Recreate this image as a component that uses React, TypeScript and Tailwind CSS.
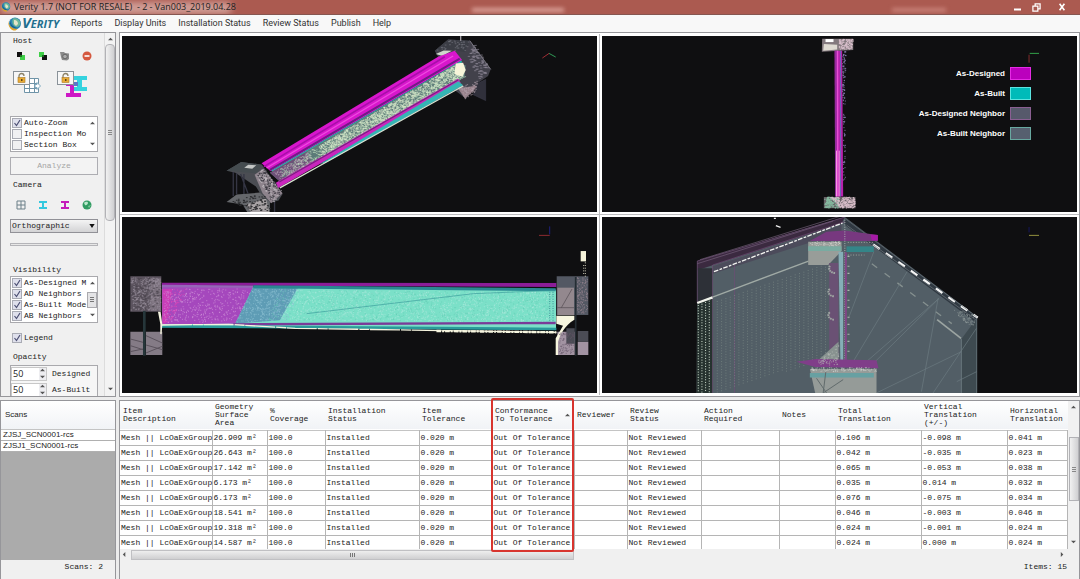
import type { ReactNode } from 'react'
import clsx from 'clsx'

const menus = ['Reports', 'Display Units', 'Installation Status', 'Review Status', 'Publish', 'Help']

const legend = [
  { label: 'As-Designed', swatch: 'bg-[#bb00bd] border-[#e52be4]' },
  { label: 'As-Built', swatch: 'bg-[#00bbb9] border-[#5ce4e0]' },
  { label: 'As-Designed Neighbor', swatch: 'bg-[#56596b] border-[#8a5f92]' },
  { label: 'As-Built Neighbor', swatch: 'bg-[#56606f] border-[#68a8a0]' },
]

const columns = [
  { title: ['Item', 'Description'], width: 'w-[92px]' },
  { title: ['Geometry', 'Surface', 'Area'], width: 'w-[55px]' },
  { title: ['%', 'Coverage'], width: 'w-[58px]' },
  { title: ['Installation', 'Status'], width: 'w-[94px]' },
  { title: ['Item', 'Tolerance'], width: 'w-[73px]' },
  { title: ['Conformance', 'To Tolerance'], width: 'w-[82px]', sorted: true },
  { title: ['Reviewer'], width: 'w-[53px]' },
  { title: ['Review', 'Status'], width: 'w-[74px]' },
  { title: ['Action', 'Required'], width: 'w-[78px]' },
  { title: ['Notes'], width: 'w-[56px]' },
  { title: ['Total', 'Translation'], width: 'w-[86px]' },
  { title: ['Vertical', 'Translation', '(+/-)'], width: 'w-[86px]' },
  { title: ['Horizontal', 'Translation'], width: '' },
]

const items = [
  { area: '26.909', total: '0.106', vertical: '-0.098', horizontal: '0.041' },
  { area: '26.643', total: '0.042', vertical: '-0.035', horizontal: '0.023' },
  { area: '17.142', total: '0.065', vertical: '-0.053', horizontal: '0.038' },
  { area: '6.173', total: '0.035', vertical: '0.014', horizontal: '0.032' },
  { area: '6.173', total: '0.076', vertical: '-0.075', horizontal: '0.034' },
  { area: '18.541', total: '0.046', vertical: '-0.003', horizontal: '0.046' },
  { area: '19.318', total: '0.024', vertical: '-0.001', horizontal: '0.024' },
  { area: '14.587', total: '0.024', vertical: '0.000', horizontal: '0.024' },
]

const scans = ['ZJSJ_SCN0001-rcs', 'ZJSJ1_SCN0001-rcs']

type Point = [number, number]
type Quad = [Point, Point, Point, Point]

// scatters n short dashes inside a quad, same result on every render
function scatter(quad: Quad, n: number, seed = 1, len = 3) {
  let s = seed * 7919
  const rnd = () => {
    s = (s * 16807) % 2147483647
    return s / 2147483647
  }
  rnd()
  let d = ''
  for (let i = 0; i < n; i++) {
    const u = rnd()
    const v = rnd()
    const at = (k: 0 | 1) =>
      (1 - v) * ((1 - u) * quad[0][k] + u * quad[1][k]) + v * ((1 - u) * quad[3][k] + u * quad[2][k])
    d += `M${at(0).toFixed(0)} ${at(1).toFixed(0)}h${len}`
  }
  return d
}

// vertical columns of scan points between two sloping edges
function dotColumns(x0: number, x1: number, step: number, top: (x: number) => number, bottom: (x: number) => number) {
  let d = ''
  for (let x = x0; x < x1; x += step) {
    for (let y = top(x); y < bottom(x); y += 8) d += `M${x} ${y.toFixed(0)}v3`
  }
  return d
}

function Globe({ className }: { className: string }) {
  return (
    <svg viewBox="0 0 14 14" className={className} aria-hidden="true">
      <circle cx="7" cy="6.500" r="6" fill="#2b86b4" />
      <path d="M5 1.500c4-1 7 1 7.500 5-1 3-3 4-5 3-3-1-4-5-2.500-8z" fill="#6db79a" />
      <path d="M6 3c3 0 4 2 4 4L8 9 6 7z" fill="#e4e4c8" />
      <path d="M0.500 4c0 5 4 8 9 8l-2 1.500C3 14-0.500 9 0.500 4z" fill="#e0a32c" />
      <path d="M2 3c0 4 3 7 7 8-4 1-8-3-7-8z" fill="#185980" />
    </svg>
  )
}

function Cubes({ flip }: { flip?: boolean }) {
  return (
    <svg viewBox="0 0 10 10" className="size-[10px]">
      <rect x="1" y="1" width="5" height="5" fill={flip ? '#3fcf48' : '#111'} />
      <rect x="4" y="4" width="5" height="5" fill={flip ? '#111' : '#3fcf48'} />
      <path d="M4 4h2v2H4z" fill="#1b6b20" />
    </svg>
  )
}

function Beam({ color }: { color: string }) {
  return (
    <svg viewBox="0 0 10 10" className="size-[10px]">
      <path d="M1 1h8v2H6v4h3v2H1V7h3V3H1z" fill={color} />
    </svg>
  )
}

function Padlock() {
  return (
    <>
      <rect x="0.5" y="0.5" width="16" height="13" fill="#f7f7f7" stroke="#8a9299" />
      <path d="M6 7V5a2.5 2.500 0 0 1 5 0" fill="none" stroke="#8d8368" strokeWidth="1.300" />
      <rect x="5" y="6.500" width="7" height="5" fill="#e8ab36" stroke="#ab7923" strokeWidth="0.600" />
      <path d="M8 8h1.500v2H8z" fill="#5e4619" />
    </>
  )
}

function IconButton({ label, children }: { label: string; children: ReactNode }) {
  return (
    <button type="button" aria-label={label} className="flex h-[14px] w-[22px] items-center justify-center">
      {children}
    </button>
  )
}

function Check({ label, checked }: { label: string; checked?: boolean }) {
  return (
    <label className="flex h-[11px] items-center gap-[2px] whitespace-nowrap">
      <span className="relative flex size-[10px] shrink-0">
        <input
          type="checkbox"
          defaultChecked={checked}
          className="peer size-[10px] appearance-none border border-[#a9abb4] bg-[#f0f0f2] checked:bg-[#dfe0ec]"
        />
        <svg viewBox="0 0 10 10" className="pointer-events-none absolute inset-0 hidden peer-checked:block">
          <path d="M2.500 5l2 2.500L8 2" fill="none" stroke="#4c4f73" strokeWidth="1.200" />
        </svg>
      </span>
      {label}
    </label>
  )
}

function Arrow({ dir }: { dir: 'up' | 'down' | 'left' | 'right' }) {
  const paths = { up: 'M0 4l3-3 3 3z', down: 'M0 1l3 3 3-3z', left: 'M4 0L1 3l3 3z', right: 'M1 0l3 3-3 3z' }
  return (
    <svg viewBox="0 0 6 6" className="size-[5px] shrink-0" fill="#555" aria-hidden="true">
      <path d={paths[dir]} />
    </svg>
  )
}

function Spin({ id, label }: { id: string; label: string }) {
  return (
    <div className="flex h-4 items-center">
      <div className="flex h-[14px] w-9 border border-[#c8c8c8] bg-white">
        <input id={id} defaultValue="50" className="w-0 min-w-0 flex-1 pl-px font-['Open_Sans',sans-serif] text-[9px]" />
        <span className="flex flex-col justify-center gap-[2px] bg-[#ededf0] px-px">
          <Arrow dir="up" />
          <Arrow dir="down" />
        </span>
      </div>
      <label htmlFor={id} className="pl-[5px] whitespace-nowrap">{label}</label>
    </div>
  )
}

function Sidebar() {
  return (
    <aside className="flex w-[116px] shrink-0 overflow-hidden border border-[#96969a] bg-[#f0f0f0]">
      <div className="min-w-0 flex-1 overflow-hidden pl-[9px]">
        <div className="w-[88px]">
          <h2 className="mt-[2px] h-3 pl-[3px] leading-3">Host</h2>
          <div className="mt-[2px] flex">
            <IconButton label="Link host"><Cubes /></IconButton>
            <IconButton label="Unlink host"><Cubes flip /></IconButton>
            <IconButton label="Capture">
              <svg viewBox="0 0 10 10" className="size-[10px]">
                <path d="M0 1h4l1 1 4 0.500V8L7 9.500 2 9 1 6z" fill="#8a8a8a" />
                <circle cx="5" cy="5.500" r="2.300" fill="#aaa" stroke="#666" />
              </svg>
            </IconButton>
            <IconButton label="Remove">
              <svg viewBox="0 0 10 10" className="size-[10px]">
                <circle cx="5" cy="5" r="4.500" fill="#d5583f" />
                <path d="M2.500 4.200h5v1.600h-5z" fill="#fff" />
              </svg>
            </IconButton>
          </div>
          <div className="mt-2 flex gap-4 pl-[3px]">
            <button type="button" aria-label="Lock table">
              <svg viewBox="0 0 28 27" className="h-[27px] w-7">
                <path d="M11.500 7.500h14v14h-14zM11.500 12.500h14M11.500 17.500h14M16.500 7.500v14M21.500 7.500v14" fill="#fff" stroke="#6f94a8" />
                <path d="M22 13.500h2v-2l3.500 3.500-3.500 3.500v-2h-2z" fill="#fff" stroke="#7faac0" />
                <Padlock />
              </svg>
            </button>
            <button type="button" aria-label="Lock model">
              <svg viewBox="0 0 31 27" className="h-[27px] w-[31px]">
                <path d="M16 5h14v4h-5v7h5v4H16v-4h4V9h-4z" fill="#35d3df" />
                <path d="M9 11h12v4h-4v7h7v4H9v-4h4v-7H9z" fill="#cd18c5" />
                <path d="M16 11h5v4h-5z" fill="#5b78c9" />
                <Padlock />
              </svg>
            </button>
          </div>

          <div className="mt-[18px] flex h-9 border border-[#a9a9ad] bg-white pl-px">
            <div className="min-w-0 flex-1">
              <Check label="Auto-Zoom" checked />
              <Check label="Inspection Mo" />
              <Check label="Section Box" />
            </div>
            <div className="flex w-[10px] flex-col items-center justify-between py-1">
              <Arrow dir="up" />
              <Arrow dir="down" />
            </div>
          </div>
          <button type="button" disabled className="mt-[5px] h-[18px] w-full border border-[#adadb2] bg-[#f3f3f3] text-[#a5a5a5]">
            Analyze
          </button>

          <h2 className="mt-1 h-3 pl-[3px] leading-3">Camera</h2>
          <div className="mt-[7px] flex">
            <IconButton label="Four views">
              <svg viewBox="0 0 10 10" className="size-[10px]">
                <path d="M1 1h8v8H1zM1 5h8M5 1v8" fill="none" stroke="#6d8089" />
              </svg>
            </IconButton>
            <IconButton label="As-built camera"><Beam color="#34c8de" /></IconButton>
            <IconButton label="As-designed camera"><Beam color="#c51cba" /></IconButton>
            <IconButton label="World camera">
              <svg viewBox="0 0 10 10" className="size-[10px]">
                <circle cx="5" cy="5" r="4.500" fill="#319b62" />
                <path d="M2 3c2-2 4-1 4 0S4 6 3 5z" fill="#b9e7ca" />
                <path d="M6 6l3-1-2 3z" fill="#7cc898" />
              </svg>
            </IconButton>
          </div>
          <div className="relative mt-[7px]">
            <select
              aria-label="Projection"
              className="h-[14px] w-full appearance-none border border-[#919197] bg-linear-to-b from-[#f4f4f4] to-[#d3d3d5] pl-px"
            >
              <option>Orthographic</option>
            </select>
            <svg viewBox="0 0 8 6" className="pointer-events-none absolute top-[5px] right-[3px] h-[4px] w-[6px]">
              <path d="M0 0h8L4 6z" fill="#111" />
            </svg>
          </div>
          <div className="mt-[10px] h-[3px] border border-[#b4b4b8] bg-[#e7e7e7]" />

          <h2 className="mt-[18px] h-3 pl-[3px] leading-3">Visibility</h2>
          <div className="flex h-[47px] border border-[#a9a9ad] bg-white pl-px">
            <div className="min-w-0 flex-1">
              <Check label="As-Designed M" checked />
              <Check label="AD Neighbors" checked />
              <Check label="As-Built Mode" checked />
              <Check label="AB Neighbors" checked />
            </div>
            <div className="flex w-[10px] flex-col items-center justify-between py-1">
              <Arrow dir="up" />
              <span className="flex h-4 w-[10px] flex-col items-center justify-center gap-px border border-[#aaaaae] bg-[#e4e4e6]">
                <i className="h-px w-1 bg-[#777]" />
                <i className="h-px w-1 bg-[#777]" />
                <i className="h-px w-1 bg-[#777]" />
              </span>
              <Arrow dir="down" />
            </div>
          </div>
          <div className="mt-[9px] pl-[2px]">
            <Check label="Legend" checked />
          </div>

          <h2 className="mt-2 h-3 pl-[3px] leading-3">Opacity</h2>
          <div className="mt-[2px] border border-b-0 border-[#a9a9ad] bg-[#f6f6f6]">
            <Spin id="designed" label="Designed" />
            <Spin id="as-built" label="As-Built" />
          </div>
        </div>
      </div>
      <div className="flex w-[11px] flex-col items-center border-l border-[#dcdcdc] bg-[#f3f3f3] pt-[4px] pb-1">
        <Arrow dir="up" />
        <span className="mt-[2px] flex h-[177px] w-[10px] flex-col items-center justify-center gap-px rounded-sm border border-[#b2b2b6] bg-linear-to-r from-[#f1f1f1] to-[#d0d0d2]">
          <i className="h-px w-1 bg-[#888]" />
          <i className="h-px w-1 bg-[#888]" />
          <i className="h-px w-1 bg-[#888]" />
        </span>
        <span className="mt-auto"><Arrow dir="down" /></span>
      </div>
    </aside>
  )
}

function Pane({ children, overlay }: { children: ReactNode; overlay?: ReactNode }) {
  return (
    <div className="relative min-h-0 min-w-0 overflow-hidden border-2 border-white bg-[#0f0f11]">
      <svg viewBox="6 6 1426 528" preserveAspectRatio="xMidYMid meet" className="absolute inset-0 size-full">
        {children}
      </svg>
      {overlay}
    </div>
  )
}

function PerspectiveView() {
  const web: Quad = [[480, 405], [1012, 88], [1036, 128], [490, 436]]
  const face: Quad = [[1040, 62], [1062, 28], [1108, 106], [1074, 142]]
  return (
    <Pane>
      <path d="M945 50l40-34 66 4 62 86-8 20-30 20-36 48-30-22z" fill="#42414b" />
      <path d="M945 50l40-34 66 4-16 34-50-8z" fill="#3b3d45" />
      <path d="M948 60l24-11 24 1-28 16z" fill="#cfd8cb" />
      <path d="M1012 160l26 0 40-6-42 40z" fill="#98828b" />
      <path d="M1074 148l24-12v64l-38-18z" fill="#30303b" stroke="#474757" />
      <path d={scatter(face, 90, 3, 7)} stroke="#8f8a98" strokeWidth="2" />
      <path d={scatter([[985, 18], [1050, 22], [1035, 50], [950, 48]], 40, 5, 5)} stroke="#74757f" strokeWidth="2" />
      <path d={scatter([[1015, 160], [1075, 140], [1065, 175], [1035, 195]], 60, 15, 4)} stroke="#b3a1ac" strokeWidth="2" />
      <path d="M1023 6v14" stroke="#d3cfd6" strokeWidth="3" />
      <path d="M1050 20l63 86" stroke="#77747f" strokeWidth="3" />

      <path d="M320 410l44-26 62 8 62 88-12 20-36 10-32-52-62-42z" fill="#4b4d53" />
      <path d="M320 410l44-26 62 8-14 26z" fill="#454c50" />
      <path d="M385 392l24 2-12 10-24-3z" fill="#c5c7c6" />
      <path d="M404 422l26-18 58 74-34 30-26-30z" fill="#8d838c" />
      <path d="M340 414v72M350 418v62M362 420l22 58M464 500v34M372 420v66" stroke="#353644" strokeWidth="4" />
      <path d="M320 504l30-22 70-6 30 30v28h-68l-14-22z" fill="#65676b" />
      <path d="M378 512l60-18 10 40h-55z" fill="#a9a4a6" />
      <path d={scatter([[404, 422], [430, 404], [488, 478], [454, 508]], 110, 6, 5)} stroke="#c5bfc6" strokeWidth="2" />
      <path d={scatter([[410, 422], [430, 404], [488, 478], [454, 508]], 80, 7, 4)} stroke="#3b3941" strokeWidth="3" />
      <path d={scatter([[330, 500], [430, 480], [450, 530], [390, 530]], 90, 8, 5)} stroke="#2a2b2e" strokeWidth="3" />

      <path d="M425 388L955 68l50-18 22 28L452 412z" fill="#d816cc" />
      <path d="M432 398L975 68" stroke="#a90eab" strokeWidth="5" />
      <path d="M440 402L1000 66" stroke="#ee4ce0" strokeWidth="4" />
      <path d="M450 408L1020 74" stroke="#721b86" strokeWidth="6" />
      <path d="M456 412L1026 82" stroke="#2bb0b0" strokeWidth="6" />
      <path d="M450 416L1012 88l26 6-4 36L484 446z" fill="#5d7a78" />
      <path d="M450 416l110-62 20 44-96 48z" fill="#6d5077" />
      <path d={scatter([[600, 334], [1012, 88], [1036, 128], [600, 386]], 1700, 9, 4)} stroke="#e1edcf" strokeWidth="2" />
      <path d={scatter(web, 900, 10, 4)} stroke="#c7e6c4" strokeWidth="2" />
      <path d={scatter(web, 250, 17, 4)} stroke="#577e78" strokeWidth="2" />
      <path d={scatter([[460, 415], [570, 350], [580, 390], [485, 440]], 180, 11, 3)} stroke="#b09bb0" strokeWidth="2" />
      <path d="M1008 88l22-2 8 22-10 20-24-8z" fill="#f7f5da" />
      <path d="M468 446L1015 134l8 12L475 462z" fill="#c926bd" />
      <path d="M478 444L1015 138" stroke="#7a237f" strokeWidth="4" />
      <path d="M600 390L1016 142l14 12-410 231z" fill="#35b5b4" />
      <path d="M480 462L620 384 1030 156" fill="none" stroke="#d8e2d2" strokeWidth="4" />
      <path d="M1268 72l20-14" stroke="#a02d34" strokeWidth="3" />
      <path d="M1288 58l20 11" stroke="#2f9a55" strokeWidth="3" />
    </Pane>
  )
}

function EndView() {
  return (
    <Pane
      overlay={
        <ul className="absolute top-[31px] right-[46px] flex flex-col items-end gap-[7px] font-['Liberation_Sans',sans-serif] text-[8px] leading-[13px] font-bold text-white">
          {legend.map((l) => (
            <li key={l.label} className="flex items-center gap-[5px]">
              {l.label}
              <span className={clsx('h-[13px] w-[21px] border', l.swatch)} />
            </li>
          ))}
        </ul>
      }
    >
      <path d="M667 14h93v34l-94 5z" fill="#83797e" />
      <path d="M672 30l40 2v14l-42 4z" fill="#dedad2" />
      <path d="M677 15h24v9h-24z" fill="#fff" />
      <path d={scatter([[716, 16], [758, 16], [758, 46], [716, 46]], 110, 2, 4)} stroke="#d8bfcb" strokeWidth="3" />
      <path d="M704 50h23l3 438h-24z" fill="#b722ad" />
      <path d="M708 50v438" stroke="#8e2f9d" strokeWidth="4" />
      <path d="M713 50l1 438" stroke="#e94ed5" strokeWidth="4" />
      <path d="M722 50v438" stroke="#6d68b8" strokeWidth="3" />
      <path d="M718 350v138M710 350v138" stroke="#f29ae0" strokeWidth="3" />
      <path d={scatter([[727, 52], [737, 52], [735, 210], [727, 210]], 80, 4)} stroke="#8478ac" strokeWidth="3" />
      <path d={scatter([[729, 230], [735, 230], [735, 440], [729, 440]], 42, 5)} stroke="#8478ac" strokeWidth="3" />
      <path d="M672 489h95v34h-95z" fill="#665f64" />
      <path d={scatter([[673, 490], [715, 490], [715, 522], [673, 522]], 150, 12, 4)} stroke="#86baa0" strokeWidth="3" />
      <path d={scatter([[690, 490], [763, 490], [763, 522], [720, 522]], 180, 13, 4)} stroke="#d9bfca" strokeWidth="3" />
      <path d="M1288 62v24" stroke="#812b2b" strokeWidth="3" />
      <path d="M1290 58h28" stroke="#31a148" strokeWidth="3" />
    </Pane>
  )
}

function SideView() {
  return (
    <Pane>
      <path d="M31 184h93v106H31z" fill="#5c545f" />
      <path d="M92 190h31v98H92z" fill="#7b717d" />
      <path d={scatter([[32, 188], [120, 188], [120, 286], [32, 286]], 330, 21, 4)} stroke="#9a919e" strokeWidth="2" />
      <path d={scatter([[32, 188], [118, 188], [118, 286], [32, 286]], 110, 22, 6)} stroke="#48424c" strokeWidth="2" />
      <path d="M73 288v134" stroke="#26363a" strokeWidth="8" />
      <path d="M31 350h38v70H31zM78 350h49v70H78z" fill="#847b86" />
      <path d="M31 372l38 10M31 392l38 12M78 362l49 22M78 390l49 14M31 410l38-8M78 414l49-20" stroke="#5a525c" strokeWidth="3" />

      <path d="M127 212l1182 12v118l-1182-8z" fill="#7be0c8" />
      <path d="M127 212l273 4-54 110-219 2z" fill="#a548bd" />
      <path d="M400 216l134 2-54 98-134 10z" fill="#5e9cb5" />
      <path d="M127 222h30l-20 104h-10z" fill="#c83db8" />
      <path d={scatter([[130, 222], [200, 222], [150, 322], [130, 322]], 120, 41)} stroke="#d845b8" strokeWidth="3" />
      <path d={scatter([[130, 222], [396, 222], [350, 322], [130, 322]], 380, 23)} stroke="#d59bdc" strokeWidth="2" />
      <path d={scatter([[396, 222], [540, 222], [500, 318], [350, 322]], 430, 24)} stroke="#8fc3d4" strokeWidth="2" />
      <path d={scatter([[520, 226], [1300, 230], [1300, 320], [480, 316]], 1500, 25)} stroke="#ace9dc" strokeWidth="2" />
      <path d={scatter([[480, 226], [1300, 230], [1300, 320], [440, 316]], 600, 26)} stroke="#64cbb5" strokeWidth="2" />
      <path d="M126 203l1184 1v12l-1184-5z" fill="#8b1d98" />
      <path d="M126 213l274 2" stroke="#9566b8" strokeWidth="7" />
      <path d="M400 215L1308 224" stroke="#2a8892" strokeWidth="9" />
      <path d="M560 296L1060 236 1306 226" fill="none" stroke="#3b9c9c" strokeWidth="2" />
      <path d="M340 328L1308 324" stroke="#7a3b98" strokeWidth="7" />
      <path d="M126 334L1310 342" stroke="#2a9a9a" strokeWidth="8" />
      <path d="M126 330l200-2 200 12 784 12" fill="none" stroke="#f6f5df" strokeWidth="4" strokeDasharray="90 3 30 2" />
      <path d="M950 348l360 4" stroke="#f6f5df" strokeWidth="7" strokeDasharray="14 3 6 3" />
      <path d="M114 290l8 0 5 38-2 30-4-1v-30z" fill="#f4f3df" />
      <path d="M1290 230v90M1300 230v90" stroke="#4da5a3" strokeWidth="4" strokeDasharray="3 4" />

      <path d="M1311 184h95v116h-95z" fill="#535863" />
      <path d="M1313 218h50v82h-50z" fill="#93888e" />
      <path d="M1325 278l32-56M1313 278h50" stroke="#514a50" strokeWidth="2" />
      <path d={scatter([[1370, 188], [1402, 188], [1402, 296], [1370, 296]], 150, 28)} stroke="#9a8792" strokeWidth="2" />
      <path d="M1368 186v236" stroke="#252e34" strokeWidth="5" />
      <path d="M1313 350h52v70h-52zM1374 380h32v40h-32z" fill="#a293a2" />
      <path d="M1340 340h25v46h-25zM1374 348h32v32h-32z" fill="#4b4c55" />
      <path d="M1310 302h54v12c-30 18-42 44-49 66v40h-7v-50l22-38-20-6z" fill="#f7f6df" />
      <path d={scatter([[1318, 354], [1362, 354], [1362, 416], [1318, 416]], 100, 29)} stroke="#645567" strokeWidth="2" />
      <path d="M1383 108h16v31h-16z" fill="#f5f3da" />
      <path d="M1397 142v44M1392 150v30" stroke="#cfcdb8" strokeWidth="3" strokeDasharray="3 5" />
      <path d="M1258 61h32" stroke="#8d2b30" strokeWidth="3" />
      <path d="M1290 34v24" stroke="#1f2180" strokeWidth="3" />
    </Pane>
  )
}

function SectionView() {
  return (
    <Pane>
      <path d="M292 138L735 6l396 298v230H290z" fill="#525e66" />
      <path d="M292 138L735 6l-10 20L340 150l-48 16z" fill="#3b2a40" />
      <path d="M292 160h46v84l-46 20z" fill="#2d3037" />
      <path d="M292 264l46-18v288h-48z" fill="#26322f" />
      <path d="M338 154L725 30v22L338 176z" fill="#4c4b5b" />
      <path d="M735 8l396 298v18L735 30z" fill="#303942" />
      <path d="M1085 372l46-62v224h-46z" fill="#3e4a50" />
      <path d="M292 138v126M292 138L735 6M338 150L735 20M404 150v384M338 150v384" fill="none" stroke="#704d76" strokeWidth="2" />
      <path d="M300 134L720 4M292 146L700 18" stroke="#75617c" strokeWidth="2" />
      <path d="M1131 304v230M1085 372v162" stroke="#75858b" strokeWidth="2" />
      <path d={dotColumns(352, 690, 13, (x) => 262 - (x - 340) * 0.34, (x) => 530 - (x - 352) * 0.3)} stroke="#7b8b87" strokeWidth="2" />
      <path d={dotColumns(295, 338, 11, (x) => 270 - (x - 295) * 0.4, () => 530)} stroke="#d5e4d5" strokeWidth="3" />
      <path d="M342 170L728 24" stroke="#f3f4f1" strokeWidth="4" strokeDasharray="14 4 8 4" />
      <path d="M292 264l46-17" stroke="#f2f4ec" strokeWidth="7" />
      <path d="M338 246l288-108" stroke="#a0aaa5" strokeWidth="4" />
      <path d="M820 88l314 220" stroke="#f5f5f5" strokeWidth="7" strokeDasharray="24 22" />
      <path d="M740 30l390 286M735 10l396 296" stroke="#6c767b" strokeWidth="2" />
      <path d="M816 146l240 180" stroke="#85908f" strokeWidth="4" strokeDasharray="20 28" />
      <path d="M1012 314l72 56" stroke="#9ca5a2" strokeWidth="5" />
      <path
        d="M822 110l-76 200M922 170L760 440M1018 250L735 530M1015 250l-50 280M1085 410L830 534M1130 340l-130 194M1018 250L800 440M1131 470l-60 30"
        fill="none"
        stroke="#6d7c82"
        strokeWidth="2"
      />
      <path d={scatter([[1050, 280], [1125, 300], [1122, 335], [1100, 325]], 80, 32)} stroke="#8e9999" strokeWidth="2" />

      <path d="M630 78l50-28 54-4 100 14v18z" fill="#77387f" />
      <path d="M812 58l22 2v16h-18z" fill="#a61aa6" />
      <path d="M625 80h100v28l-40 42h-60z" fill="#989d99" />
      <path d="M625 94h100v14H625z" fill="#79aba1" />
      <path d="M740 94h82v17h-82z" fill="#348588" />
      <path d={scatter([[628, 80], [722, 80], [722, 92], [628, 92]], 60, 33)} stroke="#d5d7d1" strokeWidth="2" />
      <path d="M688 144h28v290l-28-30z" fill="#6a5174" />
      <path d="M690 152c-6 12 2 22 18 22M690 222c-10 8-2 22 14 22M690 292c-10 8-2 22 14 22" fill="none" stroke="#9fa5a2" strokeWidth="6" strokeDasharray="5 2" />
      <path d="M716 110l14 0v348h-8z" fill="#85aeb7" />
      <path d="M735 14v440" stroke="#a8b2b0" strokeWidth="3" strokeDasharray="3 4" />
      <path d="M738 112v336" stroke="#824688" strokeWidth="6" />
      <path d="M746 122v300" stroke="#adb5b0" strokeWidth="6" strokeDasharray="4 26 3 18" />
      <path d="M744 82h76M744 120h50" stroke="#9da69f" strokeWidth="3" strokeDasharray="3 5" />
      <path d="M716 380v60h-66z" fill="#889290" />
      <path d="M590 440l60-8 180 4 6 24-190-4z" fill="#803e89" />
      <path d="M630 462h200v72H646z" fill="#959b98" />
      <path d="M630 474h192v14H630z" fill="#67a0a2" />
      <path d="M670 534l8-64M670 534l60-40M650 490l30 44" stroke="#606a6b" strokeWidth="3" />
      <path d={scatter([[634, 458], [826, 458], [830, 470], [634, 470]], 120, 34)} stroke="#cbd0cb" strokeWidth="2" />
      <path d={scatter([[650, 440], [716, 388], [716, 450], [660, 450]], 70, 35)} stroke="#b8bfba" strokeWidth="2" />
      <path d="M522 10h6M528 32l14 5" stroke="#eee" strokeWidth="4" />
      <path d="M1288 61h30" stroke="#93913d" strokeWidth="3" />
      <path d="M1288 36v16" stroke="#15165c" strokeWidth="3" />
    </Pane>
  )
}

function ScansPanel() {
  return (
    <section className="flex w-[116px] shrink-0 flex-col border border-b-0 border-[#96969a] bg-[#f0f0f0] font-['Liberation_Sans',sans-serif]">
      <h2 className="h-[29px] border-b border-[#c4c4c4] bg-linear-to-b from-white to-[#f1f3f6] pl-1 leading-[28px]">Scans</h2>
      <ul>
        {scans.map((s) => (
          <li key={s} className="h-[11px] border-b border-[#b0b0b0] bg-white pl-[2px] leading-[10px]">{s}</li>
        ))}
      </ul>
      <div className="flex-1 bg-[#ababab]" />
      <p className="h-[19px] pr-3 text-right font-['Liberation_Mono',monospace] leading-[14px]">Scans: 2</p>
    </section>
  )
}

function ItemsTable() {
  return (
    <section className="flex min-w-0 flex-1 flex-col border border-b-0 border-[#96969a] bg-[#f0f0f0]">
      <div className="relative flex h-[148px]">
        <div className="min-w-0 flex-1 overflow-hidden bg-white">
          <table className="w-full table-fixed border-collapse text-left whitespace-nowrap">
            <thead>
              <tr className="h-[29px] border-b border-[#c4c4c4] bg-linear-to-b from-white to-[#f1f3f6]">
                {columns.map((c) => (
                  <th key={c.title.join(' ')} className={clsx('relative p-0 pl-[3px] leading-[8px] font-normal', c.width)}>
                    {c.title.map((line) => (
                      <span key={line} className="block">{line}</span>
                    ))}
                    {c.sorted && <span className="absolute top-3 right-1"><Arrow dir="up" /></span>}
                  </th>
                ))}
              </tr>
            </thead>
            <tbody>
              {items.map((item, i) => (
                <tr key={i} className="h-[15px] border-b border-[#b5b5b5] leading-[14px] *:border-r *:border-[#b5b5b5] *:p-0 *:pl-px">
                  <td>Mesh || LcOaExGroup</td>
                  <td>{item.area} m²</td>
                  <td>100.0</td>
                  <td>Installed</td>
                  <td>0.020 m</td>
                  <td>Out Of Tolerance</td>
                  <td />
                  <td>Not Reviewed</td>
                  <td />
                  <td />
                  <td>{item.total} m</td>
                  <td>{item.vertical} m</td>
                  <td>{item.horizontal} m</td>
                </tr>
              ))}
            </tbody>
          </table>
        </div>
        <div className="flex w-[11px] flex-col items-center bg-[#f1f1f1] py-1">
          <Arrow dir="up" />
          <span className="mt-[27px] flex h-16 w-[10px] flex-col items-center justify-center gap-px border border-[#b2b2b6] bg-linear-to-r from-[#f1f1f1] to-[#d0d0d2]">
            <i className="h-px w-1 bg-[#888]" />
            <i className="h-px w-1 bg-[#888]" />
            <i className="h-px w-1 bg-[#888]" />
          </span>
          <span className="mt-auto"><Arrow dir="down" /></span>
        </div>
        <div className="pointer-events-none absolute -top-[3px] left-[371px] h-[154px] w-[83px] rounded-xs border-2 border-[#d8342e]" />
      </div>
      <div className="flex h-[11px] items-center pr-[14px] pl-[2px]">
        <Arrow dir="left" />
        <span className="ml-1 flex h-[10px] w-[47%] items-center justify-center gap-px border border-[#c0c0c3] bg-linear-to-b from-[#eee] to-[#cfcfd1]">
          <i className="h-1 w-px bg-[#777]" />
          <i className="h-1 w-px bg-[#777]" />
          <i className="h-1 w-px bg-[#777]" />
        </span>
        <span className="ml-auto"><Arrow dir="right" /></span>
      </div>
      <p className="h-[19px] pr-3 text-right leading-[14px]">Items: 15</p>
    </section>
  )
}

export default function App() {
  return (
    <div className="flex h-screen flex-col overflow-hidden bg-[#ececec] font-['Liberation_Mono',monospace] text-[8px] leading-[10px] text-[#222]">
      <header className="relative flex h-[15px] shrink-0 items-center overflow-hidden border-b border-[#865650] bg-[#ab5a50] font-['Open_Sans',sans-serif]">
        <div className="absolute top-[2px] left-0 h-3 w-[232px] rounded-full bg-[#e9c9c4] opacity-60 blur-[3px]" />
        <div className="absolute top-2 left-[472px] h-1 w-[92px] bg-[#dda49c] blur-[2px]" />
        <div className="absolute top-2 right-[134px] h-1 w-[54px] bg-[#c98279] blur-[2px]" />
        <Globe className="relative mr-[3px] ml-px size-[10px]" />
        <h1 className="relative text-[9px] leading-[14px] whitespace-pre">Verity 1.7 (NOT FOR RESALE)  - 2 - Van003_2019.04.28</h1>
        <div className="relative ml-auto flex h-full items-center gap-[6px] pr-1 text-white">
          <button type="button" aria-label="Minimize" className="flex w-[14px] justify-center">
            <svg viewBox="0 0 10 10" className="size-[10px]"><path d="M2 7.500h7" stroke="#fff" strokeWidth="2" /></svg>
          </button>
          <button type="button" aria-label="Restore" className="flex w-3 justify-center">
            <svg viewBox="0 0 10 10" className="size-[9px]" fill="none" stroke="#fff" strokeWidth="1.400">
              <path d="M1 3.500h5.500V9H1zM3.500 3V1H9v5.500H7" />
            </svg>
          </button>
          <button type="button" aria-label="Close" className="flex w-[28px] justify-center">
            <svg viewBox="0 0 10 10" className="size-2" stroke="#fff" strokeWidth="2">
              <path d="M2 1l6 8M8 1L2 9" />
            </svg>
          </button>
        </div>
      </header>

      <nav className="flex h-[17px] shrink-0 items-center bg-[#f8f8f8] font-['Roboto',sans-serif] text-[9px] leading-[17px]">
        <div className="flex w-[63px] items-center pl-2">
          <Globe className="size-[14px]" />
          <span className="font-['Open_Sans',sans-serif] leading-4 font-bold text-[#23708f] italic">
            <span className="text-[15px]">V</span>
            <span className="text-[11px]">ERITY</span>
          </span>
        </div>
        {menus.map((m) => (
          <button key={m} type="button" className="ml-2 pr-1 whitespace-nowrap text-[#333]">{m}</button>
        ))}
      </nav>

      <main className="flex min-h-0 flex-1 gap-[3px]">
        <Sidebar />
        <div className="flex min-w-0 flex-1 border border-[#96969a] bg-white py-px">
          <div className="grid min-w-0 flex-1 grid-cols-2 grid-rows-2 gap-px bg-[#bdbdc0]">
            <PerspectiveView />
            <EndView />
            <SideView />
            <SectionView />
          </div>
        </div>
      </main>

      <div className="mt-[3px] flex shrink-0 gap-[3px]">
        <ScansPanel />
        <ItemsTable />
      </div>
    </div>
  )
}
